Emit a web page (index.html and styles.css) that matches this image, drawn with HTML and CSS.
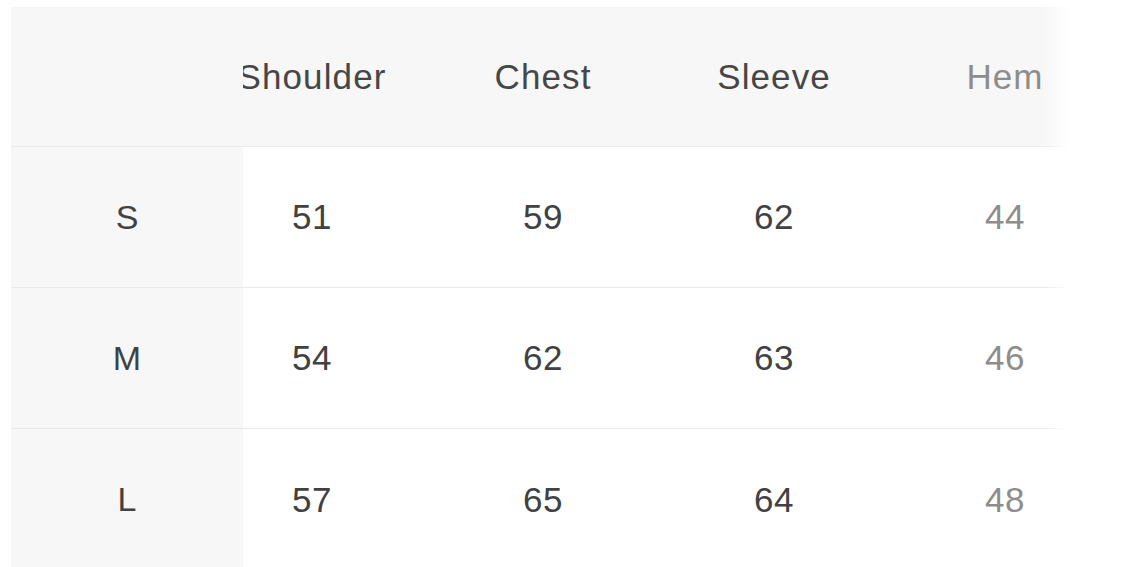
FILE: index.html
```html
<!DOCTYPE html>
<html>
<head>
<meta charset="utf-8">
<link rel="stylesheet" href="styles.css">
</head>
<body>
<div class="chart">
  <div class="row head">
    <div class="label"></div>
    <div class="view"><div class="track">
      <div class="cell">Shoulder</div>
      <div class="cell">Chest</div>
      <div class="cell">Sleeve</div>
      <div class="cell dim">Hem</div>
    </div></div>
  </div>
  <div class="row">
    <div class="label">S</div>
    <div class="view"><div class="track">
      <div class="cell">51</div>
      <div class="cell">59</div>
      <div class="cell">62</div>
      <div class="cell dim">44</div>
    </div></div>
  </div>
  <div class="row">
    <div class="label">M</div>
    <div class="view"><div class="track">
      <div class="cell">54</div>
      <div class="cell">62</div>
      <div class="cell">63</div>
      <div class="cell dim">46</div>
    </div></div>
  </div>
  <div class="row last">
    <div class="label">L</div>
    <div class="view"><div class="track">
      <div class="cell">57</div>
      <div class="cell">65</div>
      <div class="cell">64</div>
      <div class="cell dim">48</div>
    </div></div>
  </div>
  <div class="fade"></div>
</div>
</body>
</html>
```
FILE: styles.css
```css
html, body {
  margin: 0;
  padding: 0;
  background: #ffffff;
  overflow: hidden;
}
body {
  width: 1125px;
  height: 567px;
  padding: 7px 0 0 11px;
  box-sizing: border-box;
  font-family: "Liberation Sans", Arial, sans-serif;
  color: #414141;
}
.chart {
  position: relative;
  width: 1114px;
}
.row {
  display: flex;
  height: 141px;
  border-bottom: 1px solid #e9e9e9;
  box-sizing: border-box;
}
.row.head {
  height: 140px;
  background: #f7f7f7;
}
.row.last {
  border-bottom: none;
}
.label {
  width: 232px;
  flex: none;
  background: #f7f7f7;
  display: flex;
  align-items: center;
  justify-content: center;
  font-size: 34px;
  position: relative;
  z-index: 1;
}
.view {
  flex: 1;
  overflow: hidden;
}
.track {
  display: flex;
  height: 100%;
  margin-left: -46.5px;
}
.cell {
  width: 231px;
  flex: none;
  display: flex;
  align-items: center;
  justify-content: center;
  font-size: 35px;
  letter-spacing: 0.6px;
  white-space: nowrap;
}
.head .cell {
  color: #464646;
  letter-spacing: 1.1px;
  padding-top: 1px;
}
.cell.dim,
.head .cell.dim {
  color: #8d8d8d;
}
.fade {
  position: absolute;
  top: 0;
  right: 0;
  bottom: 0;
  width: 82px;
  background: linear-gradient(to right, rgba(255,255,255,0) 0%, rgba(255,255,255,1) 32%);
  pointer-events: none;
  z-index: 2;
}
```
